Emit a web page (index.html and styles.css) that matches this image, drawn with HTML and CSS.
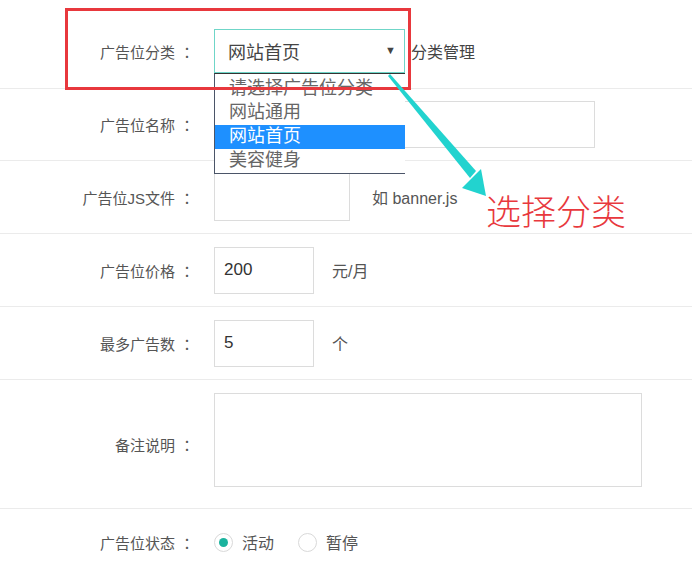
FILE: index.html
```html
<!DOCTYPE html>
<html lang="zh-CN">
<head>
    <meta charset="UTF-8">
    <title>广告位设置</title>
    <link rel="stylesheet" href="styles.css">
</head>
<body>
    <form class="form">
        <div class="row row-first">
            <label class="label">广告位分类<span class="colon">：</span></label>
            <div class="select">
                <span>网站首页</span>
                <span class="caret">▼</span>
            </div>
            <span class="note-link">分类管理</span>
        </div>
        <div class="row">
            <label class="label">广告位名称<span class="colon">：</span></label>
            <div class="input wide"></div>
        </div>
        <div class="row">
            <label class="label">广告位JS文件<span class="colon">：</span></label>
            <div class="input mid"></div>
            <span class="hint hint-js">如 banner.js</span>
        </div>
        <div class="row">
            <label class="label">广告位价格<span class="colon">：</span></label>
            <div class="input small">200</div>
            <span class="hint">元/月</span>
        </div>
        <div class="row">
            <label class="label">最多广告数<span class="colon">：</span></label>
            <div class="input small">5</div>
            <span class="hint">个</span>
        </div>
        <div class="row row-tall">
            <label class="label">备注说明<span class="colon">：</span></label>
            <div class="textarea"></div>
        </div>
        <div class="row row-last">
            <label class="label">广告位状态<span class="colon">：</span></label>
            <span class="radio checked"></span><span class="radio-text">活动</span>
            <span class="radio"></span><span class="radio-text">暂停</span>
        </div>

        <!-- 下拉展开 -->
        <ul class="dropdown">
            <li>请选择广告位分类</li>
            <li>网站通用</li>
            <li class="active">网站首页</li>
            <li>美容健身</li>
        </ul>

        <!-- 标注 -->
        <div class="mark-box"></div>
        <svg class="mark-arrow" width="110" height="130" viewBox="0 0 110 130">
            <polygon points="0,2 2,0 88,97 82,104" fill="#22d3cf"/>
            <polygon points="74,114 93,95 98,122" fill="#22d3cf"/>
        </svg>
        <span class="mark-text">选择分类</span>
    </form>
</body>
</html>
```

FILE: styles.css
```css
body {
    margin: 0;
    background: #fff;
    font-family: "Liberation Sans", "Noto Sans CJK SC", sans-serif;
    color: #555;
}

.form {
    position: relative;
    width: 692px;
    height: 562px;
    overflow: hidden;
}

.row {
    display: flex;
    align-items: center;
    box-sizing: border-box;
    height: 73px;
    border-bottom: 1px solid #ebebeb;
}

.row-first {
    height: 89px;
    padding-top: 14px;
}

.row-first + .row {
    height: 72px;
}

.row-tall {
    height: 129px;
}

.row-last {
    height: 72px;
    padding-bottom: 6px;
    border-bottom: none;
}

.label {
    width: 199px;
    margin-right: 15px;
    text-align: right;
    font-size: 15px;
    color: #555;
    flex-shrink: 0;
}

.colon {
    display: inline-block;
    width: 24px;
    text-align: center;
    font-family: "Noto Sans CJK JP", sans-serif;
}

.select {
    width: 191px;
    height: 44px;
    box-sizing: border-box;
    border: 1px solid #6fd6c8;
    display: flex;
    align-items: center;
    justify-content: space-between;
    padding: 0 8px 0 13px;
    font-size: 18px;
    color: #444;
    background: #fff;
}

.caret {
    font-size: 11px;
    color: #444;
    margin-top: -2px;
}

.note-link {
    margin-left: 6px;
    font-size: 16px;
    color: #444;
}

.input {
    height: 47px;
    box-sizing: border-box;
    border: 1px solid #dcdcdc;
    padding: 0 9px;
    display: flex;
    align-items: center;
    font-size: 17px;
    color: #333;
}

.wide {
    width: 381px;
}

.mid {
    width: 136px;
    height: 48px;
}

.small {
    width: 100px;
}

.hint {
    margin-left: 18px;
    font-size: 16px;
    color: #555;
}

.hint-js {
    margin-left: 22px;
}

.textarea {
    width: 428px;
    height: 94px;
    box-sizing: border-box;
    border: 1px solid #dcdcdc;
    margin-bottom: 8px;
}

.radio {
    width: 19px;
    height: 19px;
    box-sizing: border-box;
    border: 1px solid #d9d9d9;
    border-radius: 50%;
    position: relative;
    background: #fff;
    flex-shrink: 0;
}

.radio.checked::after {
    content: "";
    position: absolute;
    left: 4px;
    top: 4px;
    width: 9px;
    height: 9px;
    border-radius: 50%;
    background: #1bb39e;
}

.radio-text {
    margin-left: 9px;
    margin-right: 24px;
    font-size: 16px;
    color: #555;
}

.dropdown {
    position: absolute;
    left: 214px;
    top: 73px;
    width: 191px;
    height: 101px;
    box-sizing: border-box;
    margin: 0;
    padding: 3px 0 0;
    list-style: none;
    background: #fff;
    border-left: 1px solid #4b5568;
    border-bottom: 1px solid #4b5568;
    border-top: 1px solid #333;
}

.dropdown li {
    height: 24px;
    line-height: 23px;
    padding-left: 14px;
    font-size: 18px;
    color: #666;
}

.dropdown li.active {
    background: #1e90ff;
    color: #fff;
}

.mark-box {
    position: absolute;
    left: 65px;
    top: 8px;
    width: 346px;
    height: 82px;
    box-sizing: border-box;
    border: 3px solid #e8383d;
}

.mark-arrow {
    position: absolute;
    left: 388px;
    top: 74px;
}

.mark-text {
    position: absolute;
    left: 486px;
    top: 188px;
    font-family: "Noto Sans CJK SC", sans-serif;
    font-weight: 300;
    font-size: 35px;
    color: #e8383d;
    line-height: 44px;
}
```
